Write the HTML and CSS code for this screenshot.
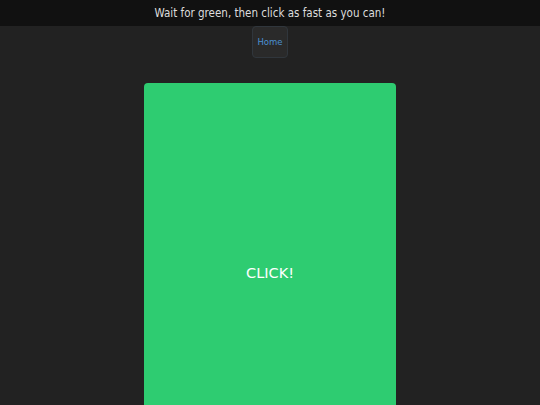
FILE: index.html
```html
<!DOCTYPE html>
<html lang="en">

<head>
  <meta charset="UTF-8">
  <meta name="viewport" content="width=device-width, initial-scale=1.0">
  <title>Reaction Time</title>
  <link rel="stylesheet" href="styles.css">
</head>

<body>

  <header class="topbar">Wait for green, then click as fast as you can!</header>

  <nav class="nav">
    <a class="home-btn" href="#">Home</a>
  </nav>

  <!-- reaction pad -->
  <div class="pad-wrap">
    <div class="pad" id="pad">CLICK!</div>
  </div>

</body>

</html>
```

FILE: styles.css
```css
body {
  margin: 0;
  background: #222;
  font-family: "DejaVu Sans", sans-serif;
  color: #ddd;
}

.topbar {
  background: #111;
  color: #ddd;
  font-family: "DejaVu Sans Condensed", "DejaVu Sans", sans-serif;
  font-size: 11.5px;
  line-height: 16px;
  padding: 5px 0;
  text-align: center;
}

.nav {
  display: flex;
  justify-content: center;
}

.home-btn {
  display: flex;
  align-items: center;
  justify-content: center;
  box-sizing: border-box;
  width: 36px;
  height: 32px;
  background: #2a2a2a;
  border: 1px solid #30363c;
  border-radius: 4px;
  color: #4a90d0;
  font-size: 8.5px;
  text-decoration: none;
}

.pad-wrap {
  display: flex;
  justify-content: center;
  padding-top: 25px;
}

.pad {
  width: 252px;
  height: 380px;
  background: #2ecc71;
  border-radius: 4px;
  display: flex;
  align-items: center;
  justify-content: center;
  color: #fff;
  font-size: 14.5px;
  cursor: pointer;
}
```
